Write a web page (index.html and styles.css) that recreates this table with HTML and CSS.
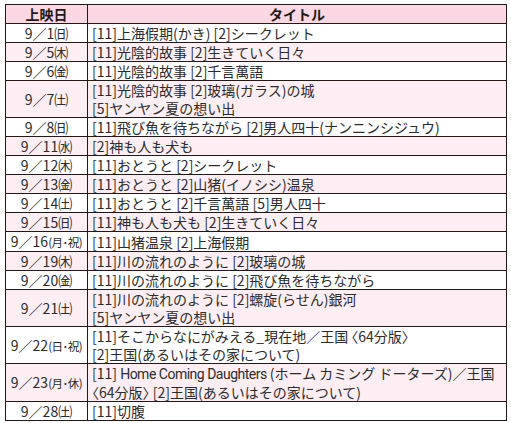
FILE: index.html
```html
<!DOCTYPE html>
<html lang="ja">
<head>
<meta charset="utf-8">
<title>上映スケジュール</title>
<link rel="stylesheet" href="styles.css">
</head>
<body>
<table class="schedule">
  <colgroup><col class="col-date"><col class="col-title"></colgroup>
  <thead>
    <tr><th>上映日</th><th>タイトル</th></tr>
  </thead>
  <tbody>
    <tr><td class="date">9／1㈰</td><td class="title">[11]上海假期(かき) [2]シークレット</td></tr>
    <tr class="alt"><td class="date">9／5㈭</td><td class="title">[11]光陰的故事 [2]生きていく日々</td></tr>
    <tr><td class="date">9／6㈮</td><td class="title">[11]光陰的故事 [2]千言萬語</td></tr>
    <tr class="alt"><td class="date">9／7㈯</td><td class="title">[11]光陰的故事 [2]玻璃(ガラス)の城<br>[5]ヤンヤン夏の想い出</td></tr>
    <tr><td class="date">9／8㈰</td><td class="title">[11]飛び魚を待ちながら [2]男人四十(ナンニンシジュウ)</td></tr>
    <tr class="alt"><td class="date">9／11㈬</td><td class="title">[2]神も人も犬も</td></tr>
    <tr><td class="date">9／12㈭</td><td class="title">[11]おとうと [2]シークレット</td></tr>
    <tr class="alt"><td class="date">9／13㈮</td><td class="title">[11]おとうと [2]山猪(イノシシ)温泉</td></tr>
    <tr><td class="date">9／14㈯</td><td class="title">[11]おとうと [2]千言萬語 [5]男人四十</td></tr>
    <tr class="alt"><td class="date">9／15㈰</td><td class="title">[11]神も人も犬も [2]生きていく日々</td></tr>
    <tr><td class="date">9／16<span class="dow">(月･祝)</span></td><td class="title">[11]山猪温泉 [2]上海假期</td></tr>
    <tr class="alt"><td class="date">9／19㈭</td><td class="title">[11]川の流れのように [2]玻璃の城</td></tr>
    <tr><td class="date">9／20㈮</td><td class="title">[11]川の流れのように [2]飛び魚を待ちながら</td></tr>
    <tr class="alt"><td class="date">9／21㈯</td><td class="title">[11]川の流れのように [2]螺旋(らせん)銀河<br>[5]ヤンヤン夏の想い出</td></tr>
    <tr><td class="date">9／22<span class="dow">(日･祝)</span></td><td class="title">[11]そこからなにがみえる_現在地／王国 <span class="br">〈64分版〉</span><br>[2]王国(あるいはその家について)</td></tr>
    <tr class="alt"><td class="date">9／23<span class="dow">(月･休)</span></td><td class="title">[11] <span class="latin">Home Coming Daughters</span> (ホーム カミング ドーターズ)／王国<br><span class="br">〈64分版〉</span> [2]王国(あるいはその家について)</td></tr>
    <tr><td class="date">9／28㈯</td><td class="title">[11]切腹</td></tr>
  </tbody>
</table>
</body>
</html>
```
FILE: styles.css
```css
html, body {
  margin: 0;
  padding: 0;
  background: #ffffff;
}
body {
  padding: 4px 0 0 5px;
  font-family: "Noto Sans CJK JP", "Noto Sans", sans-serif;
  color: #2b2b2b;
}
.schedule {
  border-collapse: collapse;
  width: 502px;
  table-layout: fixed;
  font-size: 14px;
  line-height: 18px;
}
.col-date { width: 82px; }
.schedule th,
.schedule td {
  border: 1px solid #231815;
  padding: 0;
  white-space: nowrap;
  vertical-align: middle;
}
.schedule th {
  background: #f9d8e3;
  font-weight: bold;
  text-align: center;
  color: #231815;
}
.schedule tr.alt td {
  background: #fdeef3;
}
.date {
  text-align: center;
}
.dow {
  font-size: 11.5px;
  letter-spacing: -0.5px;
}
.title {
  padding-left: 4px !important;
  overflow: hidden;
}
.br {
  font-feature-settings: "halt";
}
.latin {
  font-family: "Roboto", "Noto Sans", sans-serif;
  letter-spacing: -0.5px;
}
```
